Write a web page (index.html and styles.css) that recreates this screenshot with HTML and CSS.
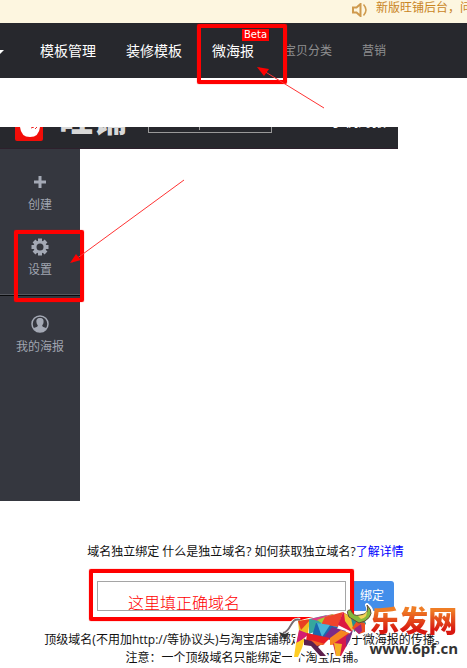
FILE: index.html
```html
<!DOCTYPE html>
<html lang="zh-CN">
<head>
<meta charset="utf-8">
<title>微海报设置</title>
<link rel="stylesheet" href="styles.css">
</head>
<body>
<div class="notice">
  <svg class="notice-icon" viewBox="0 0 16 14" aria-hidden="true"><path d="M1 4.5h3.5L8.5 1v12L4.5 9.500H1z" fill="none" stroke="#cf9a4e" stroke-width="2"/><path d="M11.500 1.500q5 5.500 0 11" fill="none" stroke="#cf9a4e" stroke-width="1.500"/></svg>
  <span>新版旺铺后台，问题反馈</span>
</div>
<nav class="nav">
  <span class="caret"></span>
  <a class="nav-link" href="#">模板管理</a>
  <a class="nav-link" href="#">装修模板</a>
  <a class="nav-link marked" href="#">微海报<span class="beta">Beta</span><span class="mark mark-nav"></span></a>
  <a class="nav-link minor" href="#">宝贝分类</a>
  <a class="nav-link minor" href="#">营销</a>
  <svg class="arrow arrow-nav" viewBox="0 0 68 44" aria-hidden="true"><path d="M2 2L67 42" stroke="#f33" stroke-width="1"/><path d="M0 1l12 2-5 7z" fill="red"/></svg>
</nav>

<header class="topbar">
  <svg class="logo" viewBox="0 0 28 14" aria-hidden="true"><path d="M0 0h28v12q0 2-2 2H2q-2 0-2-2z" fill="#f20d08"/><path d="M5 0h20q-1 10-10 10T5 0z" fill="#fff"/><path d="M16 1l3-1M20 2l2-2" stroke="#e22" stroke-width="1"/></svg>
  <span class="brand">旺铺</span>
  <span class="picker"><i></i></span>
  <span class="top-text">手机海报</span>
</header>
<div class="workspace">
  <aside class="sidebar">
    <a class="side-item" href="#">
      <svg viewBox="0 0 18 18" aria-hidden="true"><path d="M9 3v12M3 9h12" stroke="#a4a9b5" stroke-width="3"/></svg>
      <span>创建</span>
    </a>
    <a class="side-item" href="#">
      <svg viewBox="0 0 18 18" aria-hidden="true"><g stroke="#a4a9b5" fill="none"><circle cx="9" cy="9" r="5" stroke-width="3"/><path d="M9 .500v3M9 14.500v3M.500 9h3M14.500 9h3M3 3l2 2M13 13l2 2M3 15l2-2M13 5l2-2" stroke-width="4"/></g></svg>
      <span>设置</span>
      <span class="mark mark-side"></span>
    </a>
    <hr class="divider">
    <a class="side-item" href="#">
      <svg viewBox="0 0 18 18" aria-hidden="true"><circle cx="9" cy="9" r="8" fill="none" stroke="#a4a9b5" stroke-width="1.500"/><path d="M9 3c3 0 4 2 3.500 4.500-.2 1.500-.8 2-1.300 3 0 2 3.500 1.500 4.300 3Q13 17 9 17t-6.500-3.500c.8-1.500 4.300-1 4.300-3-.5-1-1.100-1.500-1.300-3C5 5 6 3 9 3z" fill="#a4a9b5"/></svg>
      <span>我的海报</span>
    </a>
  </aside>
  <svg class="arrow arrow-side" viewBox="0 0 116 86" aria-hidden="true"><path d="M2 83L114 1" stroke="#f33" stroke-width="1"/><path d="M0 84l6-9 5 6z" fill="red"/></svg>
</div>

<form class="bind">
  <label for="domain">域名独立绑定 什么是独立域名? 如何获取独立域名?<a href="#">了解详情</a></label>
  <div class="bind-row">
    <div class="field"><input id="domain" type="text" value="这里填正确域名"><span class="mark mark-field"></span></div>
    <button type="button">绑定</button>
  </div>
  <p>顶级域名(不用加http://等协议头)与淘宝店铺绑定，更有利于微海报的传播。</p>
  <p>注意：一个顶级域名只能绑定一个淘宝店铺。</p>
  <div class="watermark">
    <svg class="bull" viewBox="0 0 96 60" aria-hidden="true">
      <path d="M21 17C11 15 12 28 3 30M19 20L30 17 64 10 73 14 84 12Q92 9 88 2 98 10 86 20L86 29 80 31 73 29 70 38 67 45 62 53H57L55 43 45 41 42 45 47 53H41L33 43 23 42 19 54H15L18 40Z" fill="#fff" stroke="#fff" stroke-width="4" stroke-linejoin="round"/>
      <path d="M21 17C11 14 13 28 4 30" fill="none" stroke="#776c70" stroke-width="2"/>
      <path d="M0 29l6 2 4-2-3 7-4-2z" fill="#333"/>
      <path d="M19 18L31 16 29 30 17 42 20 28z" fill="#f0bd21"/>
      <path d="M19 18l13-2-10 11z" fill="#e93e23"/>
      <path d="M20 27l10 4-13 11z" fill="#d31d72"/>
      <path d="M30 16l18-4-10 16-8 3z" fill="#36a79d"/>
      <path d="M31 16l23-5-10 8z" fill="#e33b87"/>
      <path d="M38 17l16-6 4 5-14 5z" fill="#a3cb35"/>
      <path d="M46 14l18-5-5 15-17-2z" fill="#f0432b"/>
      <path d="M37 20l22 4-8 11-18-2z" fill="#1b67ad"/>
      <path d="M38 20l13 2-8 12z" fill="#49b5d9"/>
      <path d="M59 22l5-13 11 7-2 13z" fill="#dc1941"/>
      <path d="M53 24l14 4-8 11-15-4z" fill="#7b2b87"/>
      <path d="M28 30l23 5-7 7-17-3z" fill="#e81c24"/>
      <path d="M51 35l11-8 11 4-8 10-14 1z" fill="#f68720"/>
      <path d="M65 10l12 7-4 11-7-10z" fill="#f2c233"/>
      <path d="M72 15l12-3 3 9-12 8z" fill="#278e8e"/>
      <path d="M78 18l8 2v9l-6 2-7-6z" fill="#ec4e22"/>
      <path d="M75 26l7-5 1 7-3 3z" fill="#9e2683"/>
      <path d="M17 40l9-5-3 10-4 9h-4z" fill="#ffcd24"/>
      <path d="M25 36l17 5-3 3 8 9h-6l-9-10-7-1z" fill="#5c204e"/>
      <path d="M32 37l14 4-8 2z" fill="#ef6223"/>
      <path d="M54 41l16-11-2 12-6 11h-5z" fill="#d5194c"/>
      <path d="M55 40l8 1-2 12h-4z" fill="#f5b026"/>
      <path d="M67 34l7-7-3 10-4 7z" fill="#76308a"/>
      <path d="M70 14Q66 6 72 7q2 7 9 5 10-1 7-10 9 9-2 16l-6 2z" fill="#85b93c" stroke="#624b37"/>
      <path d="M79 13q10-1 8-7 3 8-5 10z" fill="#f6d257"/>
    </svg>
    <div class="mark-text"><strong>乐发网</strong><span>www.6pf.cn</span></div>
  </div>
</form>
</body>
</html>
```

FILE: styles.css
```css
* { box-sizing: border-box; }
body {
  margin: 0;
  background: #fff;
  color: #111;
  font: 12px/18px "Open Sans", "Noto Sans CJK SC", sans-serif;
  overflow-x: hidden;
}
a { color: inherit; text-decoration: none; }
.notice {
  display: flex;
  gap: 8px;
  height: 23px;
  padding-left: 352px;
  background: #fdf6e0;
  color: #c9851f;
  line-height: 16px;
  white-space: nowrap;
  overflow: hidden;
}
.notice-icon { flex: none; width: 16px; height: 14px; margin-top: 3px; }
.nav {
  position: relative;
  display: flex;
  align-items: center;
  gap: 30px;
  height: 55px;
  padding-left: 40px;
  background: #27282d;
  color: #fff;
  font-size: 14px;
  white-space: nowrap;
}
.nav-link { position: relative; }
.minor { color: #8f8f90; font-size: 12px; }
.marked { z-index: 1; }
.caret {
  position: absolute;
  left: -4px;
  top: 27px;
  border: 4px solid transparent;
  border-top-color: #fff;
  border-bottom: 0;
}
.beta {
  position: absolute;
  left: 30px;
  top: -13px;
  width: 27px;
  height: 12px;
  background: red;
  font: 10px/12px "DejaVu Sans", sans-serif;
  text-align: center;
}
.mark {
  position: absolute;
  border: 4px solid red;
  border-radius: 2px;
  box-shadow: 0 0 1px red;
  pointer-events: none;
}
.mark-nav { left: -15px; top: -18px; width: 90px; height: 60px; }
.mark-side { left: 14px; top: -8px; width: 70px; height: 72px; z-index: 1; }
.mark-field { left: -8px; right: -8px; top: -12px; bottom: -10px; z-index: 1; }
.arrow { position: absolute; z-index: 2; fill: none; }
.arrow-nav { left: 257px; top: 43px; width: 68px; height: 44px; }
.arrow-side { left: 70px; top: 30px; width: 116px; height: 86px; }
.topbar {
  display: flex;
  align-items: flex-start;
  width: 85.3%;
  height: 22px;
  margin-top: 49px;
  padding-left: 15px;
  border-bottom: 1px solid #2d202c;
  background: #27282d;
  overflow: hidden;
}
.logo { flex: none; width: 28px; height: 14px; }
.brand {
  flex: none;
  width: 89px;
  margin-top: -26px;
  padding-left: 16px;
  color: #d8d8d8;
  font-size: 34px;
  font-weight: 900;
  line-height: 36px;
}
.picker {
  flex: none;
  width: 124px;
  height: 6px;
  margin-left: 16px;
  border: 1px solid #999;
  border-top: 0;
}
.picker i { display: block; width: 1px; height: 3px; margin-left: 50px; background: #999; }
.top-text {
  margin: -15px 0 0 58px;
  color: #fff;
  font-size: 14px;
  line-height: 18px;
  white-space: nowrap;
}
.workspace { position: relative; }
.sidebar {
  width: 80px;
  min-height: 352px;
  padding-top: 24px;
  background: #35373f;
  color: #a0a5b0;
}
.side-item {
  position: relative;
  display: flex;
  flex-direction: column;
  align-items: center;
  gap: 4px;
  line-height: 20px;
}
.side-item + .side-item { margin-top: 23px; }
.side-item svg { width: 18px; height: 18px; }
.divider {
  height: 2px;
  margin: 14px 0 19px;
  border: 0;
  border-top: 1px solid #55575e;
  background: #090a0c;
}
.bind {
  position: relative;
  margin-top: 41px;
  padding: 0 0 1px 24px;
  text-align: center;
  white-space: nowrap;
}
.bind label { display: block; line-height: 20px; }
.bind label a { color: #00f; }
.bind-row { display: flex; justify-content: center; gap: 4px; margin: 19px 0 20px; }
.field { position: relative; width: 249px; }
.field input {
  display: block;
  width: 100%;
  height: 30px;
  padding: 12px 0 0 30px;
  border: 1px solid #a5a5a5;
  border-radius: 0;
  outline: 0;
  background: #fff;
  color: red;
  font: 300 16px/16px "Noto Sans CJK SC", sans-serif;
}
.bind button {
  width: 44px;
  height: 30px;
  padding: 0;
  border: 0;
  border-radius: 3px;
  background: #438eea;
  color: #fff;
  font: inherit;
}
.bind p { margin: 0; }
.watermark {
  position: absolute;
  right: 9px;
  bottom: 5px;
  z-index: 3;
  display: flex;
  align-items: flex-start;
}
.bull { width: 96px; height: 60px; margin-right: -6px; }
.mark-text { display: flex; flex-direction: column; align-items: center; }
.mark-text strong {
  background: linear-gradient(#ef7d25 20%, #d81810 75%);
  background-clip: text;
  color: transparent;
  font-size: 29px;
  font-weight: 900;
  line-height: 36px;
}
.mark-text span {
  color: #333;
  font: bold 15px/18px "Open Sans", sans-serif;
  text-shadow: 1px 0 #fff, -1px 0 #fff, 0 1px #fff, 0 -1px #fff;
}
```
